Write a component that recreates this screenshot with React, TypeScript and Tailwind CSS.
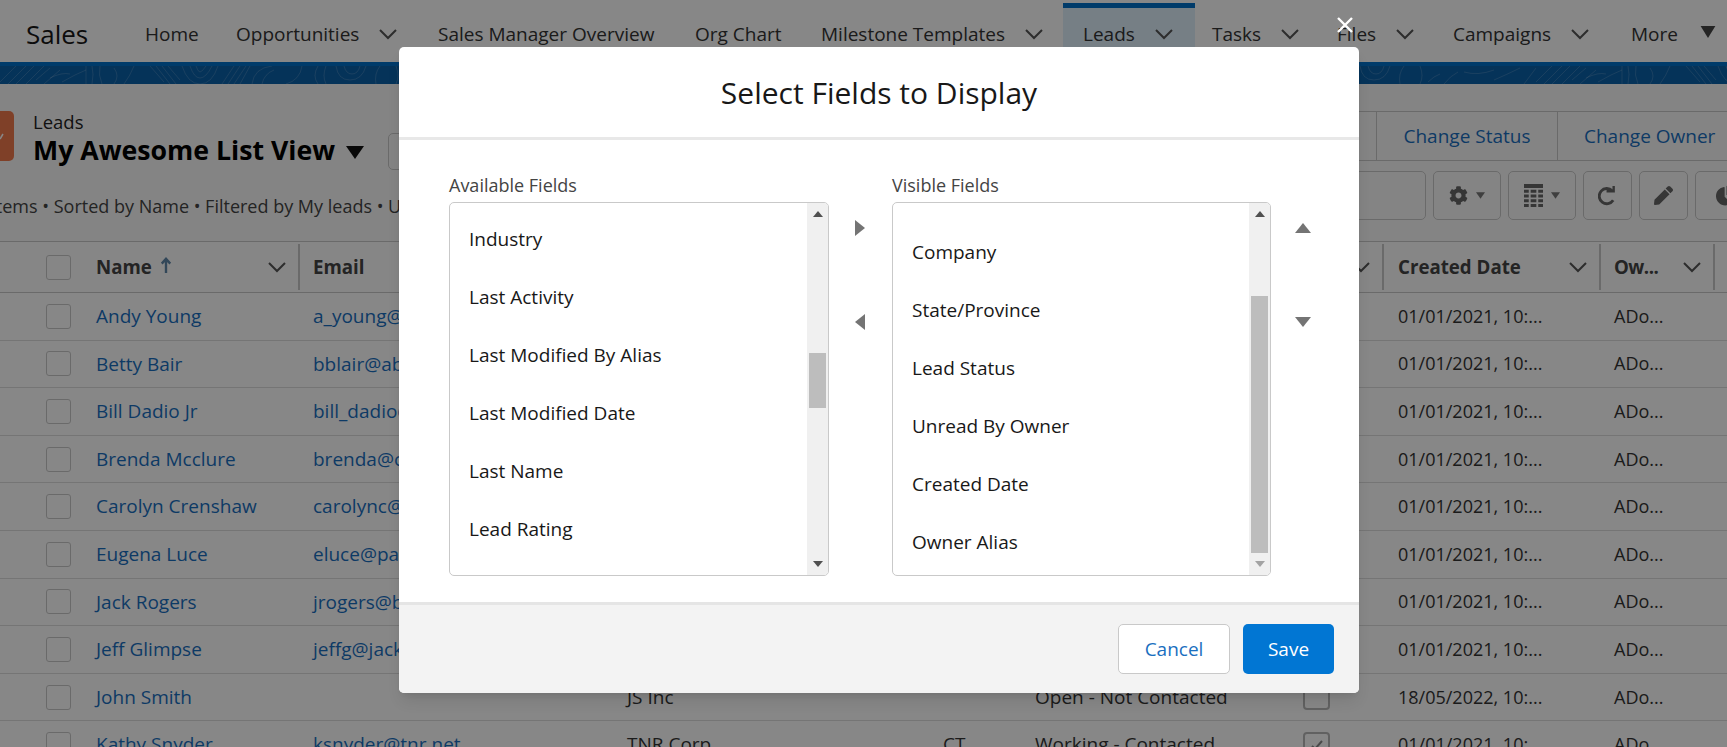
import React from "react";
import { FaCog, FaPen, FaChartPie } from "react-icons/fa";

const Chevron = ({ className = "" }: { className?: string }) => (
  <svg viewBox="0 0 18 11" className={"w-[18px] h-[11px] shrink-0 " + className} fill="none" stroke="currentColor" strokeWidth="2">
    <path d="M1 1l8 8 8-8" />
  </svg>
);

const navItems: { label: string; width: number; chevron?: boolean; active?: boolean }[] = [
  { label: "Home", width: 91 },
  { label: "Opportunities", width: 202, chevron: true },
  { label: "Sales Manager Overview", width: 257 },
  { label: "Org Chart", width: 126 },
  { label: "Milestone Templates", width: 242, chevron: true },
  { label: "Leads", width: 132, chevron: true, active: true },
  { label: "Tasks", width: 125, chevron: true },
  { label: "Files", width: 116, chevron: true },
  { label: "Campaigns", width: 178, chevron: true },
];

const rows = [
  ["Andy Young", "a_young@dickenson.com", "", "", "", false, "01/01/2021, 10:..."],
  ["Betty Bair", "bblair@abbottinsurance.net", "", "", "", false, "01/01/2021, 10:..."],
  ["Bill Dadio Jr", "bill_dadio@zenith.com", "", "", "", false, "01/01/2021, 10:..."],
  ["Brenda Mcclure", "brenda@cardinal.net", "", "", "", false, "01/01/2021, 10:..."],
  ["Carolyn Crenshaw", "carolync@ace.com", "", "", "", false, "01/01/2021, 10:..."],
  ["Eugena Luce", "eluce@pacificretail.com", "", "", "", false, "01/01/2021, 10:..."],
  ["Jack Rogers", "jrogers@burlington.com", "", "", "", false, "01/01/2021, 10:..."],
  ["Jeff Glimpse", "jeffg@jackson.com", "", "", "", false, "01/01/2021, 10:..."],
  ["John Smith", "", "JS Inc", "", "Open - Not Contacted", false, "18/05/2022, 10:..."],
  ["Kathy Snyder", "ksnyder@tnr.net", "TNR Corp", "CT", "Working - Contacted", true, "01/01/2021, 10:..."],
] as const;

const gridCols = "grid grid-cols-[96px_217px_314px_316px_92px_269px_94px_216px_113px]";

const Box = ({ checked = false, thick = false }: { checked?: boolean; thick?: boolean }) => (
  <div
    className={
      thick
        ? "w-[27px] h-[25px] ml-[46px] border-2 border-[#b8b8b8] rounded-[4px] flex items-center justify-center"
        : "w-[25px] h-[25px] ml-[46px] border border-[#c9c9c9] rounded-[3px] flex items-center justify-center"
    }
  >
    {checked && (
      <svg viewBox="0 0 14 14" className="w-[14px] h-[14px]" fill="none" stroke="#8a8a8a" strokeWidth="2">
        <path d="M2 8l3 3 7-8" />
      </svg>
    )}
  </div>
);

const HeadCell = ({ label, sep = true, arrow = false, margin = "", labelClass = "" }: { label: string; sep?: boolean; arrow?: boolean; margin?: string; labelClass?: string }) => (
  <div className={"flex items-center pr-[12px] pt-[1px] h-[46px] " + (sep ? "border-r-2 border-[#c9c9c9] " : "") + margin}>
    <span className={"font-bold text-[18.700px] text-[#444] whitespace-nowrap " + labelClass}>{label}</span>
    {arrow && (
      <svg viewBox="0 0 12 18" className="w-[12px] h-[17px] ml-[8px] -mt-[5px]" fill="none" stroke="#5f86a8" strokeWidth="2.500">
        <path d="M6 17V2M1.500 7L6 2l4.500 5" />
      </svg>
    )}
    <Chevron className="ml-auto text-[#555]" />
  </div>
);

const ToolBtn = ({ children, width }: { children: React.ReactNode; width: string }) => (
  <div className={"h-[49px] border border-[#c9c9c9] rounded-[5px] flex items-center justify-center gap-[8px] shrink-0 text-[#666] " + width}>
    {children}
  </div>
);

const Caret = () => (
  <svg viewBox="0 0 10 7" className="w-[9px] h-[7px]"><path d="M0 0h10L5 7z" fill="#777" /></svg>
);

const Pattern = () => (
  <svg className="w-full h-[18px] block" viewBox="0 0 1727 18" preserveAspectRatio="none">
    <defs>
      <pattern id="topo" width="512" height="18" patternUnits="userSpaceOnUse">
        <g fill="none" stroke="#ffffff" strokeOpacity="0.16" strokeWidth="1">
          <path d="M0 16L16 0M8 18L26 0M16 18L34 0M26 18L44 0M36 14L50 2M44 18L60 4" />
          <path d="M50 12q12-6 20-4M62 16q14-8 24-12" />
          <path d="M86 0v18M92 0q2 8 0 18M100 0q-2 9 2 18M114 2q6 8 0 16M124 18q6-8 10-18" />
          <path d="M150 0l14 16M156 0l14 18M162 0l14 18M168 0l12 14" />
          <path d="M182 0q6 18 18 18t18-18M190 0q4 12 10 12t12-12M196 0q2 6 4 6t6-6" />
          <path d="M222 18l12-18M228 18l12-18M234 18l12-18M240 18l10-18" />
          <path d="M252 18q2-16 20-18M262 18q2-10 12-14" />
          <path d="M286 18q14-4 16-18" />
          <path d="M318 18q-6-8 0-18M326 18q-4-8 0-18" />
          <path d="M336 0q2 14 14 14t16-14M344 0q2 8 8 8t8-8" />
          <path d="M376 18q-2-10 4-18M396 18q4-8 0-18M404 16q6-6 12-8M420 18q6-8 14-12" />
          <path d="M440 6q14 4 30-2M470 14q14-6 26-12M500 18l12-16" />
        </g>
      </pattern>
    </defs>
    <rect width="1727" height="18" fill="url(#topo)" />
  </svg>
);

const Scrollbar = ({ thumbTop, thumbHeight, downFaded = false }: { thumbTop: number; thumbHeight: number; downFaded?: boolean }) => (
  <div className="w-[21px] shrink-0 bg-[#f0f0f0] flex flex-col items-center rounded-r-[3px]">
    <svg viewBox="0 0 10 6" className="w-[10px] h-[6px] mt-[8px] shrink-0"><path d="M0 6L5 0l5 6z" fill="#505050" /></svg>
    <div className="w-[17px] bg-[#bdbdbd] shrink-0" style={{ marginTop: thumbTop, height: thumbHeight }} />
    <svg viewBox="0 0 10 6" className="w-[10px] h-[6px] mt-auto mb-[8px] shrink-0">
      <path d="M0 0l5 6 5-6z" fill={downFaded ? "#a3a3a3" : "#505050"} />
    </svg>
  </div>
);

const FieldList = ({ label, items, top, thumbTop, thumbHeight, downFaded, width }: { label: string; items: string[]; top: string; thumbTop: number; thumbHeight: number; downFaded?: boolean; width: string }) => (
  <div className={"shrink-0 " + width}>
    <div className="text-[18px] leading-[24px] text-[#444] h-[34px] pt-[5px]">{label}</div>
    <div className="h-[374px] border border-[#c9c9c9] rounded-[5px] flex overflow-hidden">
      <div className={"flex-1 pl-[19px] " + top}>
        {items.map((i) => (
          <div key={i} className="h-[58px] flex items-center text-[19px] text-[#181818]">{i}</div>
        ))}
      </div>
      <Scrollbar thumbTop={thumbTop} thumbHeight={thumbHeight} downFaded={downFaded} />
    </div>
  </div>
);

export default function App() {
  return (
    <div className="relative w-[1727px] h-[747px] overflow-hidden bg-[#fafafa] font-['Open_Sans','Noto_Sans',sans-serif] text-[#181818]">
      {/* Navigation */}
      <div className="h-[62px] bg-white flex items-end">
        <div className="h-[59px] flex items-center w-[145px] pl-[26px] pt-[3px] text-[26px] shrink-0">Sales</div>
        {navItems.map((n) => (
          <div
            key={n.label}
            className={
              "h-[59px] shrink-0 flex items-center text-[19px] text-[#333] " +
              (n.active ? "bg-[#dff0fc] pl-[20px] mr-[17px] pb-[2px] border-t-[5px] border-[#0170c8]" : "pt-[3px]")
            }
            style={{ width: n.width }}
          >
            <span className="whitespace-nowrap">{n.label}</span>
            {n.chevron && <Chevron className="ml-[20px] text-[#555]" />}
          </div>
        ))}
        <div className="h-[59px] pt-[3px] flex items-center text-[19px] text-[#333]">
          More
          <svg viewBox="0 0 16 13" className="w-[16px] h-[12px] ml-[22px] -mt-[4px]"><path d="M0 0h16L8 13z" fill="#444" /></svg>
        </div>
      </div>
      <div className="bg-[#0a60a8] h-[22px] border-t-4 border-[#0170c8]">
        <Pattern />
      </div>

      {/* List header */}
      <div className="h-[157px] flex flex-col">
        <div className="flex items-start justify-between pt-[27px]">
          <div className="flex items-start">
            <div className="w-[14px] h-[50px] bg-[#f0794d] rounded-r-[5px] flex items-center shrink-0 mr-[19px]">
              <svg viewBox="0 0 4 10" className="w-[4px] h-[10px]"><path d="M0 8l3-5" stroke="#fff" strokeWidth="1.500" fill="none" /></svg>
            </div>
            <div>
              <div className="text-[18.500px] leading-[22px] text-[#222]">Leads</div>
              <div className="flex items-center h-[36px] -mt-[1px]">
                <span className="text-[26.700px] font-bold text-black whitespace-nowrap">My Awesome List View</span>
                <svg viewBox="0 0 18 13" className="w-[18px] h-[13px] ml-[11px] mt-[4px]"><path d="M0 0h18L9 13z" fill="#111" /></svg>
                <div className="w-[40px] h-[37px] border border-[#c9c9c9] rounded-[5px] ml-[24px] mt-[2px]" />
              </div>
            </div>
          </div>
          <div className="flex h-[50px] border-y border-[#c9c9c9] items-center text-[19px] text-[#1a6fbf] shrink-0">
            <div className="w-[40px] h-full" />
            <div className="w-[181px] h-full flex items-center justify-center border-l border-[#c9c9c9] whitespace-nowrap">Change Status</div>
            <div className="w-[170px] h-full flex items-center pl-[26px] border-l border-[#c9c9c9] whitespace-nowrap">Change Owner</div>
          </div>
        </div>
        <div className="flex items-start justify-between">
          <div className="text-[18px] leading-[26px] text-[#444] -ml-[34px] mt-[25px] whitespace-nowrap">10 items • Sorted by Name • Filtered by My leads • Updated a few seconds ago</div>
          <div className="flex gap-[7px] mt-[3px] -mr-[30px] shrink-0">
            <div className="w-[100px] h-[49px] border border-[#c9c9c9] rounded-[5px]" />
            <ToolBtn width="w-[68px]"><FaCog className="w-[19px] h-[19px]" /><Caret /></ToolBtn>
            <ToolBtn width="w-[68px]">
              <svg viewBox="0 0 20 24" className="w-[19px] h-[23px]" fill="#666">
                <path d="M0 0h20v4H0zM0 6h5v3H0zM7 6h6v3H7zM15 6h5v3h-5zM0 11h5v3H0zM7 11h6v3H7zM15 11h5v3h-5zM0 16h5v3H0zM7 16h6v3H7zM15 16h5v3h-5zM0 21h5v3H0zM7 21h6v3H7zM15 21h5v3h-5z" />
              </svg>
              <Caret />
            </ToolBtn>
            <ToolBtn width="w-[49px]">
              <svg viewBox="0 0 20 22" className="w-[19px] h-[21px]" fill="none" stroke="#666" strokeWidth="3">
                <path d="M16 16a8 8 0 1 1-1-10" />
                <path d="M9 6.500h7.500V1" fill="none" strokeWidth="2.500" />
              </svg>
            </ToolBtn>
            <ToolBtn width="w-[49px]"><FaPen className="w-[19px] h-[19px]" /></ToolBtn>
            <ToolBtn width="w-[62px]"><FaChartPie className="w-[21px] h-[21px]" /></ToolBtn>
          </div>
        </div>
      </div>

      {/* Table */}
      <div className="bg-white">
        <div className={gridCols + " h-[52px] items-center bg-[#fdfdfd] border-y border-[#c9c9c9]"}>
          <div><Box /></div>
          <HeadCell label="Name" arrow margin="mr-[13px]" />
          <HeadCell label="Email" sep={false} />
          <div />
          <div />
          <div />
          <HeadCell label="" margin="mr-[14px]" />
          <HeadCell label="Created Date" margin="mr-[13px]" />
          <HeadCell label="Ow..." margin="mr-[12px]" labelClass="tracking-[-0.500px]" />
        </div>
        {rows.map((r) => (
          <div key={r[0]} className={gridCols + " h-[47.600px] items-center border-b border-[#dddddd] text-[19px]"}>
            <div><Box /></div>
            <div className="text-[#1a6fbf] whitespace-nowrap">{r[0]}</div>
            <div className="text-[#1a6fbf] whitespace-nowrap">{r[1]}</div>
            <div className="whitespace-nowrap text-[#333]">{r[2]}</div>
            <div className="text-[#333]">{r[3]}</div>
            <div className="whitespace-nowrap text-[#333]">{r[4]}</div>
            <div className="-ml-[47px]"><Box checked={r[5]} thick /></div>
            <div className="whitespace-nowrap text-[#333] text-[18px]">{r[6]}</div>
            <div className="text-[#333] text-[18px]">ADo...</div>
          </div>
        ))}
      </div>

      {/* Modal overlay */}
      <div className="absolute inset-0 bg-black/47 pt-[47px] pl-[399px]">
        <svg viewBox="0 0 16 16" className="absolute left-[1337px] top-[17px] w-[16px] h-[16px]" fill="none" stroke="#fff" strokeWidth="2.400">
          <path d="M1 1l14 14M15 1L1 15" />
        </svg>
        <div className="w-[960px] h-[646px] bg-white rounded-[5px] overflow-hidden flex flex-col shadow-lg">
          <div className="h-[93px] border-b-[3px] border-[#e8e8e8] flex items-center justify-center text-[30px] text-[#181818] shrink-0">
            Select Fields to Display
          </div>
          <div className="flex-1 flex pl-[50px] pt-[28px]">
            <FieldList
              label="Available Fields"
              items={["Industry", "Last Activity", "Last Modified By Alias", "Last Modified Date", "Last Name", "Lead Rating"]}
              top="pt-[7px]"
              thumbTop={136}
              thumbHeight={55}
              width="w-[380px]"
            />
            <div className="w-[63px] shrink-0 pt-[52px] pl-[26px]">
              <svg viewBox="0 0 10 16" className="w-[10px] h-[16px]"><path d="M0 0l10 8-10 8z" fill="#747474" /></svg>
              <svg viewBox="0 0 10 16" className="w-[10px] h-[16px] mt-[78px]"><path d="M10 0L0 8l10 8z" fill="#747474" /></svg>
            </div>
            <FieldList
              label="Visible Fields"
              items={["Company", "State/Province", "Lead Status", "Unread By Owner", "Created Date", "Owner Alias"]}
              top="pt-[20px]"
              thumbTop={79}
              thumbHeight={257}
              downFaded
              width="w-[379px]"
            />
            <div className="pl-[24px] pt-[55px] shrink-0">
              <svg viewBox="0 0 16 10" className="w-[16px] h-[10px]"><path d="M0 10L8 0l8 10z" fill="#747474" /></svg>
              <svg viewBox="0 0 16 10" className="w-[16px] h-[10px] mt-[84px]"><path d="M0 0l8 10 8-10z" fill="#747474" /></svg>
            </div>
          </div>
          <div className="h-[91px] shrink-0 bg-[#f3f3f3] border-t-[3px] border-[#e5e5e5] flex items-center justify-end gap-[13px] pr-[25px]">
            <button className="w-[112px] h-[50px] bg-white border border-[#c9c9c9] rounded-[5px] text-[19px] text-[#1a6fbf]">Cancel</button>
            <button className="w-[91px] h-[50px] bg-[#0176d3] rounded-[5px] text-[19px] text-white">Save</button>
          </div>
        </div>
      </div>
    </div>
  );
}
